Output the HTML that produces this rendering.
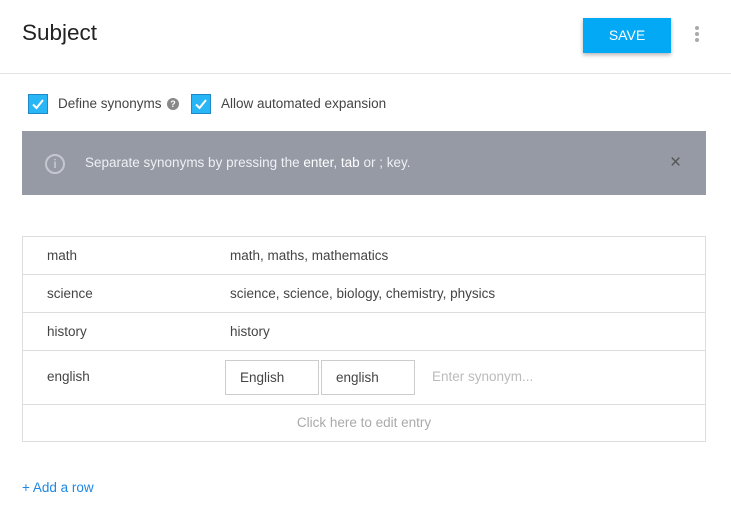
<!DOCTYPE html>
<html><head><style>
*{margin:0;padding:0;box-sizing:border-box}
body{width:731px;height:530px;background:#fff;font-family:"Liberation Sans",sans-serif;color:#444;position:relative;overflow:hidden}
.a{position:absolute;white-space:nowrap;font-size:13.5px}
.cb{position:absolute;width:20px;height:20px;background:#29b6f6;border:1px solid #1e88c8}
.row{position:absolute;left:22px;width:684px;border-top:1px solid #ddd}
</style></head><body>
<div class="a" style="left:22px;top:20px;font-size:22.5px;color:#222">Subject</div>
<div class="a" style="left:583px;top:18px;width:88px;height:35px;background:#03a9f4;color:#fff;font-size:14px;text-align:center;line-height:35px;box-shadow:0 2px 4px rgba(0,0,0,.3)">SAVE</div>
<div class="a" style="left:695px;top:26px;width:4px;height:4px;border-radius:2px;background:#aaa"></div>
<div class="a" style="left:695px;top:32px;width:4px;height:4px;border-radius:2px;background:#aaa"></div>
<div class="a" style="left:695px;top:38px;width:4px;height:4px;border-radius:2px;background:#aaa"></div>
<div class="a" style="left:0;top:73px;width:731px;height:1px;background:#e3e3e3"></div>

<div class="cb" style="left:28px;top:94px"><svg width="18" height="18" viewBox="0 0 18 18"><path d="M4 9.5l3.5 3.5L14 5" stroke="#fff" stroke-width="2" fill="none"/></svg></div>
<div class="a" style="left:58px;top:96px;color:#444">Define synonyms</div>
<div class="a" style="left:167px;top:98px;width:12px;height:12px;border-radius:6px;background:#888;color:#fff;font-size:9px;font-weight:bold;text-align:center;line-height:12px">?</div>
<div class="cb" style="left:191px;top:94px"><svg width="18" height="18" viewBox="0 0 18 18"><path d="M4 9.5l3.5 3.5L14 5" stroke="#fff" stroke-width="2" fill="none"/></svg></div>
<div class="a" style="left:221px;top:96px;color:#444">Allow automated expansion</div>

<div class="a" style="left:22px;top:131px;width:684px;height:64px;background:#959aa5"></div>
<div class="a" style="left:45px;top:154px;width:20px;height:20px;border-radius:10px;border:2px solid #c4c7ce;color:#c4c7ce;font-size:12px;font-weight:bold;text-align:center;line-height:16px">i</div>
<div class="a" style="left:85px;top:155px;color:#eef0f4">Separate synonyms by pressing the <span style="color:#fff">enter</span>, <span style="color:#fff">tab</span> or ; key.</div>
<div class="a" style="left:670px;top:152px;font-size:19px;color:#555">×</div>

<div class="a" style="left:22px;top:236px;width:684px;height:206px;border:1px solid #ddd"></div>
<div class="row" style="top:274px"></div>
<div class="row" style="top:312px"></div>
<div class="row" style="top:350px"></div>
<div class="row" style="top:404px"></div>
<div class="a" style="left:47px;top:248px">math</div>
<div class="a" style="left:230px;top:248px">math, maths, mathematics</div>
<div class="a" style="left:47px;top:286px">science</div>
<div class="a" style="left:230px;top:286px">science, science, biology, chemistry, physics</div>
<div class="a" style="left:47px;top:324px">history</div>
<div class="a" style="left:230px;top:324px">history</div>
<div class="a" style="left:47px;top:369px">english</div>
<div class="a" style="left:225px;top:360px;width:94px;height:35px;border:1px solid #ccc;padding-left:14px;line-height:33px">English</div>
<div class="a" style="left:321px;top:360px;width:94px;height:35px;border:1px solid #ccc;padding-left:14px;line-height:33px">english</div>
<div class="a" style="left:432px;top:369px;color:#bbb">Enter synonym...</div>
<div class="a" style="left:22px;top:415px;width:684px;text-align:center;color:#aaa">Click here to edit entry</div>

<div class="a" style="left:22px;top:480px;color:#1e88e5">+ Add a row</div>
</body></html>
